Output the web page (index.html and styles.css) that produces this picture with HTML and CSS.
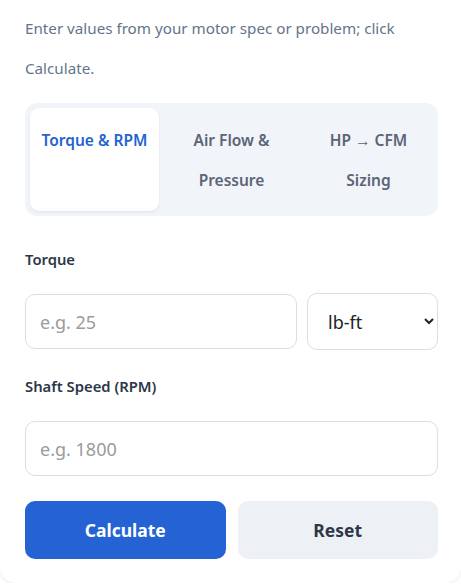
FILE: index.html
```html
<!DOCTYPE html>
<html lang="en">
<head>
<meta charset="UTF-8">
<meta name="viewport" content="width=device-width, initial-scale=1.0">
<title>Motor Fan Calculator</title>
<link rel="stylesheet" href="styles.css">
</head>
<body>

<div class="card">
  <p class="intro">Enter values from your motor spec or problem; click Calculate.</p>

  <div class="tabs">
    <button class="tab active">Torque &amp; RPM</button>
    <button class="tab">Air Flow &amp; Pressure</button>
    <button class="tab">HP → CFM Sizing</button>
  </div>

  <div class="field">
    <label for="torque">Torque</label>
    <div class="row">
      <input type="text" id="torque" placeholder="e.g. 25">
      <select id="torque-unit">
        <option>lb-ft</option>
        <option>N·m</option>
        <option>oz-in</option>
      </select>
    </div>
  </div>

  <div class="field">
    <label for="rpm">Shaft Speed (RPM)</label>
    <input type="text" id="rpm" placeholder="e.g. 1800">
  </div>

  <div class="buttons">
    <button class="btn primary">Calculate</button>
    <button class="btn secondary">Reset</button>
  </div>
</div>

</body>
</html>
```

FILE: styles.css
```css
body {
  margin: 0;
  padding: 0;
  background: #fff;
  font-family: 'Noto Sans', 'Open Sans', sans-serif;
  color: #2d3748;
}

.card {
  background: #fff;
  padding: 8px 23px 24px 25px;
  border-radius: 0 0 16px 16px;
  box-shadow: 0 1px 4px rgba(0, 0, 0, 0.08);
}

.intro {
  margin: 0;
  font-size: 15.2px;
  line-height: 40px;
  color: #64748b;
}

/* Tabs */
.tabs {
  margin-top: 15px;
  display: grid;
  grid-template-columns: repeat(3, 1fr);
  gap: 8px;
  padding: 5px;
  background: #f1f4f9;
  border-radius: 12px;
}

.tab {
  display: flex;
  flex-direction: column;
  justify-content: flex-start;
  align-items: center;
  border: none;
  background: transparent;
  padding: 12px 8px 11px;
  border-radius: 9px;
  font-family: inherit;
  font-size: 15.5px;
  font-weight: 600;
  line-height: 40px;
  color: #5b6577;
  cursor: pointer;
}

.tab.active {
  background: #fff;
  color: #2563d0;
  box-shadow: 0 1px 3px rgba(0, 0, 0, 0.08);
}

/* Form */
.field { margin-top: 23px; }
.field + .field { margin-top: 16px; }

.field label {
  display: block;
  font-size: 14.8px;
  font-weight: 600;
  line-height: 40px;
  color: #2d3748;
  margin-bottom: 15px;
}

.row {
  display: flex;
  gap: 10px;
}

input[type="text"], select {
  box-sizing: border-box;
  height: 55px;
  border: 1px solid #d9dde5;
  border-radius: 10px;
  background: #fff;
  font-family: 'Noto Sans', sans-serif;
  font-size: 18px;
  color: #222;
}

input[type="text"] {
  width: 100%;
  padding: 0 14px;
}

input[type="text"]::placeholder { color: #9b9b9b; }

.row input[type="text"] { flex: 1; }

select {
  width: 131px;
  height: 57px;
  margin-top: -1px;
  padding: 0 16px;
}

/* Buttons */
.buttons {
  margin-top: 25px;
  display: flex;
  gap: 12px;
}

.btn {
  flex: 1;
  height: 58px;
  border: none;
  border-radius: 10px;
  font-family: inherit;
  font-size: 17.5px;
  font-weight: 700;
  cursor: pointer;
}

.btn.primary { background: #2563d4; color: #fff; }
.btn.secondary { background: #edf0f5; color: #2d3748; }
```
